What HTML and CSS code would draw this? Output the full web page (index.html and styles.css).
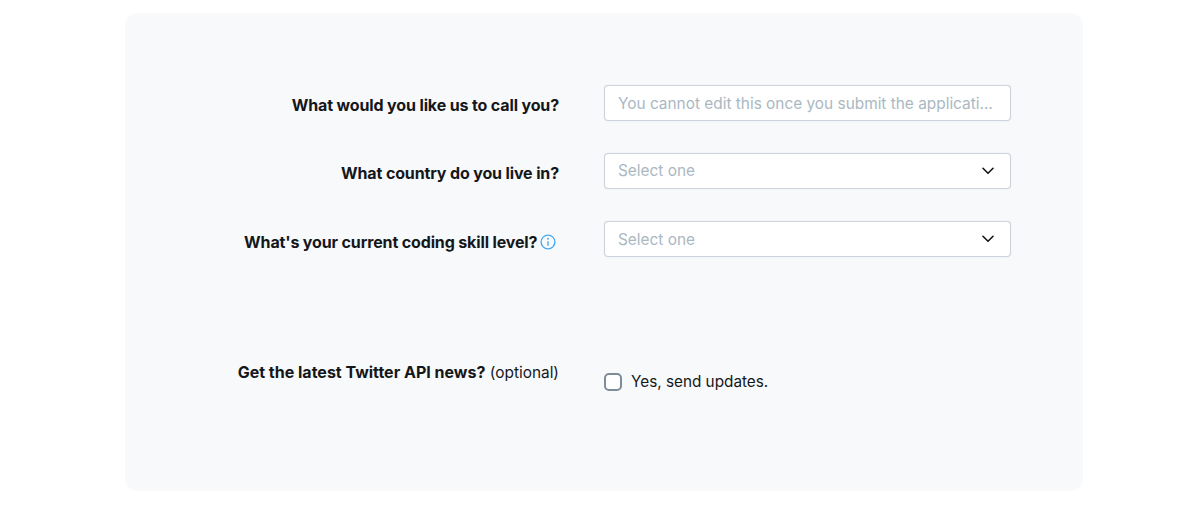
FILE: index.html
```html
<!DOCTYPE html>
<html lang="en">
<head>
<meta charset="utf-8">
<title>Application</title>
<link rel="stylesheet" href="styles.css">
</head>
<body>
<main class="card">
  <form class="form">
    <div class="row">
      <label class="label" for="name">What would you like us to call you?</label>
      <input class="control" id="name" type="text" placeholder="You cannot edit this once you submit the application">
    </div>
    <div class="row">
      <label class="label" for="country">What country do you live in?</label>
      <div class="select-wrap">
        <select class="control select" id="country"><option>Select one</option></select>
        <svg class="chevron" viewBox="0 0 12 8" width="12" height="8" aria-hidden="true"><path d="M1 1.3 6 6.3 11 1.3" fill="none" stroke="#14171a" stroke-width="1.6" stroke-linecap="round" stroke-linejoin="round"/></svg>
      </div>
    </div>
    <div class="row">
      <label class="label label-info" for="skill">What's your current coding skill level?
        <svg class="info" viewBox="0 0 16 16" width="16" height="16" aria-hidden="true"><circle cx="8" cy="8" r="6.9" fill="none" stroke="#4aa8ee" stroke-width="1.4"/><circle cx="8" cy="4.8" r="0.95" fill="#4aa8ee"/><path d="M8 7.2V11.8" fill="none" stroke="#4aa8ee" stroke-width="1.4"/></svg>
      </label>
      <div class="select-wrap">
        <select class="control select select-low" id="skill"><option>Select one</option></select>
        <svg class="chevron" viewBox="0 0 12 8" width="12" height="8" aria-hidden="true"><path d="M1 1.3 6 6.3 11 1.3" fill="none" stroke="#14171a" stroke-width="1.6" stroke-linecap="round" stroke-linejoin="round"/></svg>
      </div>
    </div>
    <div class="row row-news">
      <div class="label label-news"><b class="news-title">Get the latest Twitter API news?</b> <span class="optional">(optional)</span></div>
      <label class="check">
        <input class="checkbox" type="checkbox">
        <span class="check-text">Yes, send updates.</span>
      </label>
    </div>
  </form>
</main>
</body>
</html>
```
FILE: styles.css
```css
* { box-sizing: border-box; }

html, body {
  margin: 0;
  height: 100%;
  background: #fff;
}

body {
  padding: 13px 117px 18px 125px;
  font-family: Inter, "Liberation Sans", sans-serif;
  font-size: 16px;
  line-height: 24px;
  color: #14171a;
  overflow: hidden;
}

.card {
  height: 478px;
  background: #f8f9fb;
  border-radius: 12px;
  padding: 72px 72px 0 0;
}

.form {
  display: flex;
  flex-direction: column;
  gap: 32px;
}

.row {
  display: grid;
  grid-template-columns: 434px 407px;
  column-gap: 45px;
  align-items: start;
}

.label {
  text-align: right;
  font-weight: 700;
  letter-spacing: -0.14px;
  padding-top: 8px;
}

.label-info {
  padding-top: 9px;
  padding-right: 3px;
  white-space: nowrap;
}

.info {
  vertical-align: -2px;
  margin-left: -1px;
}

.control {
  display: block;
  width: 100%;
  height: 36px;
  padding: 0 13px;
  margin: 0;
  background: #fff;
  border: 1px solid #ccd3da;
  border-radius: 4px;
  box-shadow: 0 0 1px #ccd3da;
  font: inherit;
  font-size: 15.4px;
  color: #aab8c2;
  text-overflow: ellipsis;
  outline: none;
}

.control::placeholder {
  color: #aab8c2;
  opacity: 1;
}

.select {
  appearance: none;
  -webkit-appearance: none;
  padding-bottom: 0;
}

.select-low {
  padding-top: 2px;
}

.select-wrap {
  position: relative;
}

.chevron {
  position: absolute;
  right: 17px;
  top: 14px;
  pointer-events: none;
}

.row-news {
  margin-top: 71px;
}

.label-news {
  font-weight: 400;
  padding-top: 0;
  letter-spacing: 0;
}

.optional {
  font-weight: 400;
  font-size: 15.4px;
}

.check {
  display: flex;
  align-items: center;
  gap: 9px;
  padding-top: 8px;
  font-size: 15.3px;
}

.check-text {
  padding-top: 2px;
}

.checkbox {
  appearance: none;
  -webkit-appearance: none;
  width: 18px;
  height: 18px;
  margin: 2px 0 0;
  background: #fff;
  border: 2px solid #7d8c9a;
  border-radius: 5px;
}
```
